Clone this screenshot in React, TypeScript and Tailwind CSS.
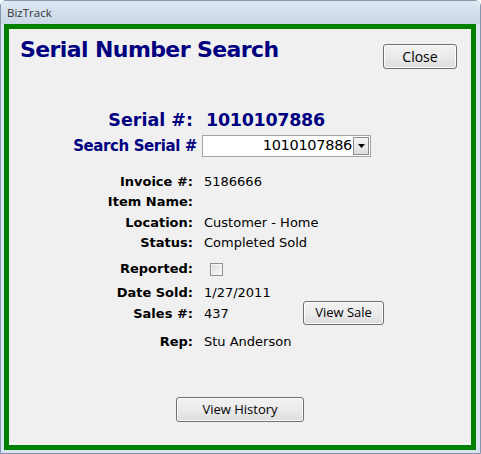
import React from 'react';

const labelCls = "text-right font-bold text-[13px] text-black";
const valueCls = "pl-[11px] text-[13px] text-black";

function Row({ label, value, className = '' }: { label: string; value?: React.ReactNode; className?: string }) {
  return (
    <div className={`flex h-[20px] items-center ${className}`}>
      <div className={`w-[184px] ${labelCls}`}>{label}</div>
      <div className={valueCls}>{value}</div>
    </div>
  );
}

function WinButton({ children, className = '' }: { children: React.ReactNode; className?: string }) {
  return (
    <button
      className={`flex items-center justify-center rounded-[3px] border border-[#707070] bg-gradient-to-b from-[#f2f2f2] via-[#ebebeb] to-[#dcdcdc] text-black shadow-[inset_0_0_0_1px_#fcfcfc] ${className}`}
    >
      {children}
    </button>
  );
}

export default function App() {
  return (
    <div className="flex h-[454px] w-[481px] flex-col rounded-t-[6px] border border-[#8497ad] bg-[#d9e4f0] font-['DejaVu_Sans',sans-serif]">
      {/* ------- title bar ------- */}
      <div className="flex h-[23px] items-center bg-gradient-to-b from-[#dfe8f2] to-[#c9d7e7] pl-[6px] font-['Open_Sans',sans-serif] text-[11.5px] text-[#333]">
        BizTrack
      </div>

      {/* ------- client area ------- */}
      <div className="mx-[3px] mb-[3px] mr-[4px] flex flex-1 flex-col border-[5px] border-[#008000] bg-[#f0f0f0]">
        <div className="flex h-[79px] items-start justify-between">
          <h1 className="pl-[11px] pt-[7px] text-[22px] font-bold leading-[28px] tracking-[-0.6px] text-[#000080]">
            Serial Number Search
          </h1>
          <WinButton className="mr-[14px] mt-[15px] h-[25px] w-[74px] font-['Open_Sans',sans-serif] text-[14px]">
            Close
          </WinButton>
        </div>

        <div className="flex h-[24px] items-center text-[17.5px] font-bold text-[#000080]">
          <div className="w-[184px] text-right">Serial #:</div>
          <div className="pl-[13px] tracking-[-0.3px]">1010107886</div>
        </div>

        <div className="mt-[2px] flex h-[24px] items-center">
          <div className="w-[188px] text-right text-[15px] font-bold tracking-[-0.4px] text-[#000080]">Search Serial #</div>
          <div className="ml-[5px] flex h-[22px] w-[169px] items-center justify-end border border-[#a5a5a5] bg-white pr-[1px]">
            <span className="pr-[1px] text-[14.5px] tracking-[-0.3px] text-black">1010107886</span>
            <span className="flex h-[18px] w-[16px] items-center justify-center border border-[#8a8a8a] bg-gradient-to-b from-[#f4f4f4] to-[#dedede]">
              <svg width="7" height="4" viewBox="0 0 7 4"><path d="M0 0h7L3.5 4z" fill="#000" /></svg>
            </span>
          </div>
        </div>

        <Row label="Invoice #:" value="5186666" className="mt-[14px]" />
        <Row label="Item Name:" />
        <Row label="Location:" value="Customer - Home" className="mt-[1px]" />
        <Row label="Status:" value="Completed Sold" />

        <div className="mt-[6px] flex h-[20px] items-center">
          <div className={`w-[184px] ${labelCls}`}>Reported:</div>
          <span className="ml-[17px] h-[13px] w-[13px] border border-[#8e8f8f] bg-gradient-to-br from-[#dcdcdc] to-[#fbfbfb] shadow-[inset_0_0_0_1px_#f4f4f4]" />
        </div>

        <div className="mt-[4px] flex items-start">
          <div className="flex w-[294px] flex-col">
            <Row label="Date Sold:" value="1/27/2011" />
            <Row label="Sales #:" value="437" className="mt-[1px]" />
          </div>
          <WinButton className="mt-[18px] h-[24px] w-[81px] font-['Open_Sans',sans-serif] text-[13px]">
            View Sale
          </WinButton>
        </div>

        <Row label="Rep:" value="Stu Anderson" className="mt-[7px]" />

        <div className="mt-[45px] flex pl-[167px]">
          <WinButton className="h-[25px] w-[128px] font-['Open_Sans',sans-serif] text-[13px]">
            View History
          </WinButton>
        </div>
      </div>
    </div>
  );
}
